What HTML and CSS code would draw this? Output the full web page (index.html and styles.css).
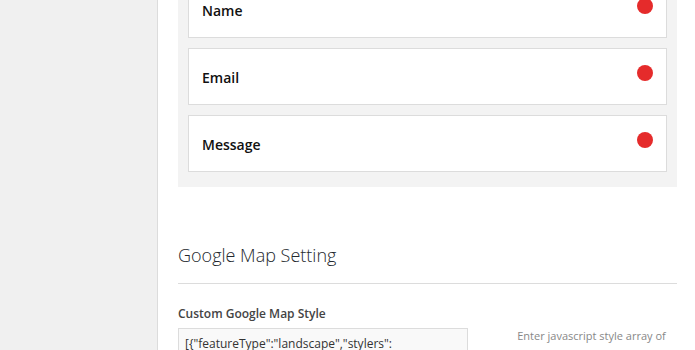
FILE: index.html
```html
<!DOCTYPE html>
<html lang="en">

<head>
    <meta charset="UTF-8">
    <meta name="viewport" content="width=device-width, initial-scale=1.0">
    <title>Contact Form Settings</title>
    <link rel="stylesheet" href="styles.css">
</head>

<body>
    <div class="sidebar"></div>

    <div class="main">
        <div class="fields-panel">
            <div class="field-card">
                <span class="field-name">Name</span>
                <span class="required-dot"></span>
            </div>
            <div class="field-card">
                <span class="field-name">Email</span>
                <span class="required-dot"></span>
            </div>
            <div class="field-card">
                <span class="field-name">Message</span>
                <span class="required-dot"></span>
            </div>
        </div>

        <h2 class="section-title">Google Map Setting</h2>

        <div class="setting-row">
            <div class="setting-field">
                <label for="map-style">Custom Google Map Style</label>
                <textarea id="map-style" rows="3">[{"featureType":"landscape","stylers":[{"saturation":-100},{"lightness":65}]}]</textarea>
            </div>
            <p class="setting-desc">Enter javascript style array of google map styles to customize the map.</p>
        </div>
    </div>
</body>

</html>
```

FILE: styles.css
```css
* {
    margin: 0;
    padding: 0;
    box-sizing: border-box;
}

body {
    font-family: "Open Sans", "Liberation Sans", sans-serif;
    background-color: #ffffff;
    display: flex;
    min-height: 100vh;
    overflow: hidden;
}

.sidebar {
    width: 158px;
    flex-shrink: 0;
    background-color: #f0f0f0;
    border-right: 1px solid #dcdcdc;
}

.main {
    flex: 1;
    padding: 0 18px 0 20px;
}

.fields-panel {
    background-color: #f3f3f3;
    padding: 0 10px 15px;
    margin-top: -19px;
}

.field-card {
    height: 57px;
    background-color: #ffffff;
    border: 1px solid #dcdcdc;
    padding: 2px 13px 0 13px;
    display: flex;
    justify-content: space-between;
    align-items: center;
    margin-bottom: 10px;
}

.field-card:last-child {
    margin-bottom: 0;
}

.field-name {
    font-size: 14px;
    font-weight: 600;
    color: #111;
}

.required-dot {
    width: 16px;
    height: 16px;
    border-radius: 50%;
    background-color: #e52b2b;
    align-self: flex-start;
    margin-top: 14px;
}

.section-title {
    margin-top: 56px;
    padding-bottom: 16px;
    border-bottom: 1px solid #dcdcdc;
    font-size: 18px;
    line-height: 24px;
    font-weight: 300;
    color: #23282d;
}

.setting-row {
    display: flex;
    margin-top: 22px;
}

.setting-field {
    width: 290px;
    flex-shrink: 0;
}

.setting-field label {
    display: block;
    font-size: 12px;
    line-height: 16px;
    font-weight: 600;
    color: #444;
    margin-bottom: 6px;
}

.setting-field textarea {
    display: block;
    width: 290px;
    height: 70px;
    padding: 6px 6px 4px;
    border: 1px solid #dcdcdc;
    background-color: #f9f9f9;
    font-family: "Open Sans", "Liberation Sans", sans-serif;
    font-size: 12px;
    line-height: 18px;
    color: #333;
    resize: none;
}

.setting-desc {
    margin-left: 38px;
    padding-top: 21px;
    flex: 1;
    font-size: 11px;
    line-height: 18px;
    color: #888;
    text-align: center;
}
```
